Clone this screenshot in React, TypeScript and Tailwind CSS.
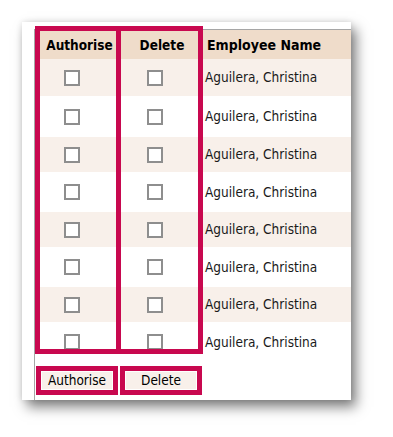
import React from "react";

const RED = "border-[#c8084f]";

function Box() {
  return <span className="block w-[16px] h-[16px] border-2 border-[#8e8e8e] bg-white" />;
}

const rowHeights = ["h-[37px]", "h-[41px]", "h-[35px]", "h-[40px]", "h-[35px]", "h-[40px]", "h-[35px]", "h-[40px]"];

export default function App() {
  return (
    <div
      className="w-[393px] h-[437px] bg-white pt-[22px] pl-[22px]"
      style={{ fontFamily: '"DejaVu Sans Condensed", "Liberation Sans", sans-serif' }}
    >
      <div className="relative w-[329px] h-[378px] bg-white shadow-[5px_7px_12px_rgba(0,0,0,0.5),0_0_6px_rgba(0,0,0,0.12)] pl-[12px] pt-[7px]">
        <div className="h-[371px] w-[317px] border-l border-t border-[#a6a6a6] flex flex-col text-[13.5px] text-[#1a1a1a]">
          <div className="flex h-[29px] bg-[#efdcca] font-bold text-black items-center pt-[2px]">
            <div className="w-[83px] pl-[6px] text-center">Authorise</div>
            <div className="w-[82px] pl-[6px] text-center">Delete</div>
            <div className="flex-1 pl-[7px] text-[14px]">Employee Name</div>
          </div>
          {rowHeights.map((h, i) => (
            <div key={i} className={`flex items-center ${h} ${i % 2 === 0 ? "bg-[#f8f0ea]" : "bg-white"}`}>
              <div className="w-[83px] flex justify-start pl-[29px]">
                <Box />
              </div>
              <div className="w-[82px] flex justify-start pl-[29px]">
                <Box />
              </div>
              <div className="flex-1 pl-[5px]">Aguilera, Christina</div>
            </div>
          ))}
          <div className="flex gap-[2px] pl-[1px] pt-[4px]">
            <div className={`w-[82px] h-[29px] border-[5px] ${RED} bg-white p-[1px]`}>
              <div className="w-full h-full bg-[#f8f0ea] flex items-center justify-center text-black">Authorise</div>
            </div>
            <div className={`w-[82px] h-[29px] border-[5px] ${RED} bg-white p-[1px]`}>
              <div className="w-full h-full bg-[#f8f0ea] flex items-center justify-center text-black">Delete</div>
            </div>
          </div>
        </div>
        <div className={`absolute left-[13px] top-[4px] w-[86px] h-[328px] border-[5px] ${RED}`} />
        <div className={`absolute left-[94px] top-[4px] w-[87px] h-[328px] border-[5px] ${RED}`} />
      </div>
    </div>
  );
}
